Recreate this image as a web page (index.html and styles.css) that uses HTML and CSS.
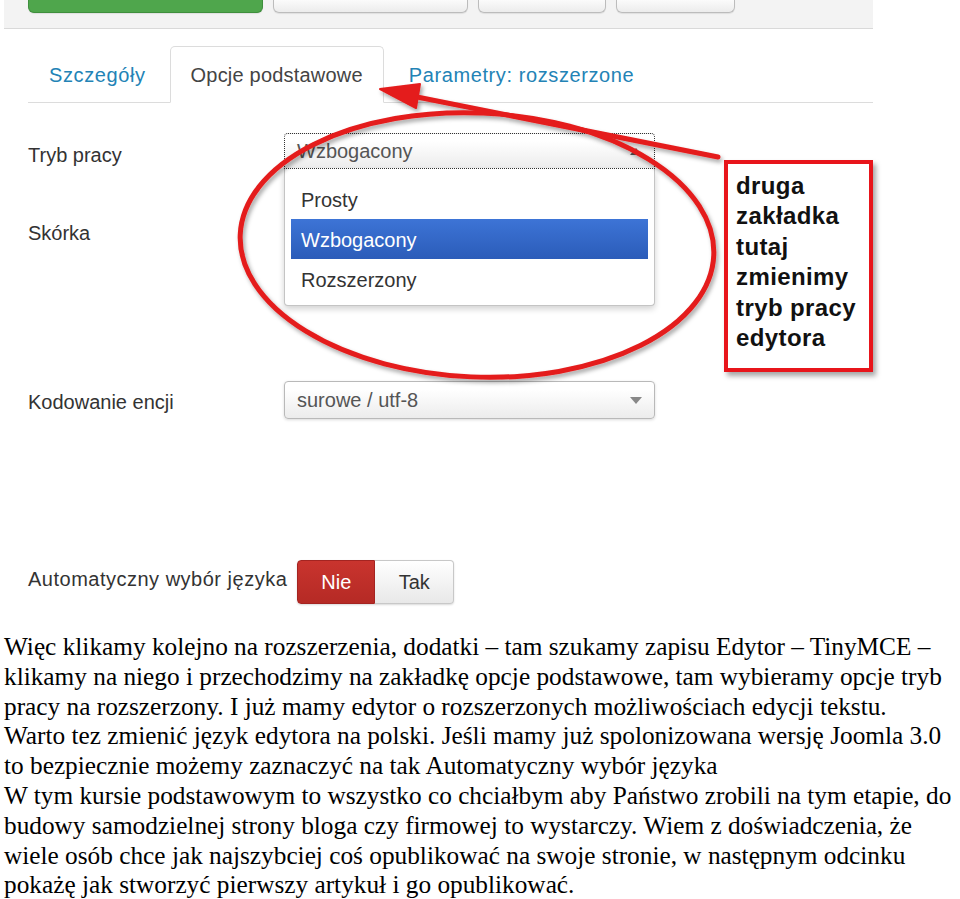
FILE: index.html
```html
<!DOCTYPE html>
<html lang="pl">
<head>
    <meta charset="UTF-8">
    <title>Edytor TinyMCE – opcje podstawowe</title>
    <link rel="stylesheet" href="styles.css">
</head>
<body>
    <div class="page">
        <div class="shot">
            <div class="toolbar">
                <span class="tb-btn tb-save"></span>
                <span class="tb-btn tb-w2"></span>
                <span class="tb-btn tb-w3"></span>
                <span class="tb-btn tb-w4"></span>
            </div>

            <ul class="tabs">
                <li class="tab first">Szczegóły</li>
                <li class="tab active">Opcje podstawowe</li>
                <li class="tab">Parametry: rozszerzone</li>
            </ul>

            <div class="form">
                <div class="row row-mode">
                    <label>Tryb pracy</label>
                    <div class="select focus">Wzbogacony<span class="caret dark"></span></div>
                </div>
                <div class="row row-skin">
                    <label>Skórka</label>
                </div>
                <div class="row row-enc">
                    <label>Kodowanie encji</label>
                    <div class="select">surowe / utf-8<span class="caret"></span></div>
                </div>
                <div class="row row-lang">
                    <label>Automatyczny wybór języka</label>
                    <div class="toggle">
                        <span class="opt on">Nie</span>
                        <span class="opt">Tak</span>
                    </div>
                </div>
            </div>

            <!-- open list of the "Tryb pracy" select -->
            <ul class="dropdown">
                <li>Prosty</li>
                <li class="hl">Wzbogacony</li>
                <li>Rozszerzony</li>
            </ul>

            <div class="callout">
                druga<br>
                zakładka<br>
                tutaj<br>
                zmienimy<br>
                tryb pracy<br>
                edytora
            </div>

            <svg class="marks" viewBox="0 0 960 620" width="960" height="620">
                <defs>
                    <filter id="shade" x="-10%" y="-10%" width="120%" height="130%">
                        <feDropShadow dx="2" dy="3" stdDeviation="2" flood-color="#000" flood-opacity="0.35"/>
                    </filter>
                </defs>
                <g filter="url(#shade)" fill="none" stroke="#e41c1c" stroke-linecap="round">
                    <ellipse cx="477" cy="245" rx="237" ry="132" stroke-width="5" transform="rotate(2.5 477 245)"/>
                    <line x1="718" y1="157" x2="412" y2="96" stroke-width="5"/>
                    <polygon points="380,89 420,84 416,108" fill="#e41c1c" stroke-width="2" stroke-linejoin="round"/>
                </g>
            </svg>
        </div>

        <p class="article">
            Więc klikamy kolejno na rozszerzenia, dodatki – tam szukamy zapisu Edytor – TinyMCE –<br>
            klikamy na niego i przechodzimy na zakładkę opcje podstawowe, tam wybieramy opcje tryb<br>
            pracy na rozszerzony. I już mamy edytor o rozszerzonych możliwościach edycji tekstu.<br>
            Warto tez zmienić język edytora na polski. Jeśli mamy już spolonizowana wersję Joomla 3.0<br>
            to bezpiecznie możemy zaznaczyć na tak Automatyczny wybór języka<br>
            W tym kursie podstawowym to wszystko co chciałbym aby Państwo zrobili na tym etapie, do<br>
            budowy samodzielnej strony bloga czy firmowej to wystarczy. Wiem z doświadczenia, że<br>
            wiele osób chce jak najszybciej coś opublikować na swoje stronie, w następnym odcinku<br>
            pokażę jak stworzyć pierwszy artykuł i go opublikować.
        </p>
    </div>
</body>
</html>
```

FILE: styles.css
```css
* {
    margin: 0;
    padding: 0;
    box-sizing: border-box;
}

body {
    background: #fff;
    color: #000;
}

.page {
    position: relative;
    width: 960px;
}

/* the pasted Joomla screenshot */
.shot {
    position: relative;
    width: 869px;
    margin-left: 4px;
    padding-bottom: 8px;
    font-family: "Liberation Sans", Arial, sans-serif;
    font-size: 20px;
    color: #333;
}

.toolbar {
    display: flex;
    gap: 10px;
    height: 29px;
    padding-left: 24px;
    background: #f3f3f3;
    border-bottom: 1px solid #d9d9d9;
}

.tb-btn {
    display: block;
    width: 195px;
    height: 13px;
    background: linear-gradient(#fbfbfb, #ececec);
    border: 1px solid #bcbcbc;
    border-top: none;
    border-radius: 0 0 6px 6px;
    box-shadow: 0 1px 1px rgba(0,0,0,0.08);
}

.tb-save {
    width: 235px;
    background: #4fa64c;
    border-color: #3f8f3d;
}

.tb-w3 {
    width: 128px;
}

.tb-w4 {
    width: 119px;
}

.tabs {
    display: flex;
    list-style: none;
    margin: 17px 0 0 24px;
    border-bottom: 1px solid #dcdcdc;
}

.tab {
    height: 57px;
    padding: 0 20px;
    line-height: 56px;
    color: #2383b6;
    letter-spacing: 0.6px;
    margin-bottom: -1px;
    border: 1px solid transparent;
    border-radius: 5px 5px 0 0;
}

.tab.first {
    padding-right: 23px;
}

.tab.active {
    color: #444;
    letter-spacing: 0.2px;
    background: #fff;
    border-color: #dcdcdc;
    border-bottom-color: #fff;
    margin-right: 4px;
}

.form {
    padding-left: 24px;
}

.row {
    display: flex;
    align-items: center;
    height: 36px;
}

.row label {
    width: 256px;
    flex: none;
    margin-top: 8px;
}

.row-mode {
    margin-top: 30px;
}

.row-skin {
    margin-top: 42px;
}

.row-enc {
    margin-top: 134px;
    height: 38px;
}

.row-enc label {
    margin-top: 4px;
}

.row-lang {
    margin-top: 141px;
    height: 44px;
}

.row-lang label {
    width: auto;
    margin: 0 10px 6px 0;
    letter-spacing: 0.5px;
}

.select {
    position: relative;
    width: 371px;
    height: 100%;
    padding-left: 12px;
    display: flex;
    align-items: center;
    color: #555;
    background: linear-gradient(#fff 20%, #ececec);
    border: 1px solid #b9b9b9;
    border-radius: 4px;
    box-shadow: 0 1px 3px rgba(0,0,0,0.15);
}

.select.focus {
    border: 1px dotted #333;
    border-radius: 4px 4px 0 0;
    box-shadow: none;
}

.caret {
    position: absolute;
    right: 12px;
    top: 15px;
    border-left: 6px solid transparent;
    border-right: 6px solid transparent;
    border-top: 7px solid #888;
}

.caret.dark {
    top: 14px;
    border-top: none;
    border-bottom: 7px solid #555;
}

.toggle {
    display: flex;
    height: 100%;
    border-radius: 4px;
    box-shadow: 0 1px 2px rgba(0,0,0,0.15);
}

.opt {
    width: 79px;
    display: flex;
    align-items: center;
    justify-content: center;
    color: #333;
    background: linear-gradient(#fff, #e8e8e8);
    border: 1px solid #c8c8c8;
    border-left: none;
    border-radius: 0 4px 4px 0;
}

.opt.on {
    width: 78px;
    color: #fff;
    background: linear-gradient(#c9342e, #b52a25);
    border: 1px solid #a42421;
    border-radius: 4px 0 0 4px;
}

.dropdown {
    position: absolute;
    left: 280px;
    top: 169px;
    width: 371px;
    height: 137px;
    list-style: none;
    padding: 10px 6px 0;
    background: #fff;
    border: 1px solid #c4c4c4;
    border-top: none;
    border-radius: 0 0 4px 4px;
    box-shadow: 0 3px 6px rgba(0,0,0,0.18);
}

.dropdown li {
    height: 40px;
    line-height: 42px;
    padding-left: 10px;
    color: #333;
}

.dropdown li.hl {
    color: #fff;
    background: linear-gradient(#3d74d6, #2b5cb9);
}

.callout {
    position: absolute;
    left: 720px;
    top: 160px;
    width: 149px;
    height: 212px;
    padding: 7px 0 0 8px;
    border: 4px solid #e8151b;
    background: #fff;
    font-weight: bold;
    font-size: 24px;
    line-height: 30.4px;
    letter-spacing: 0.4px;
    color: #111;
    box-shadow: 3px 4px 5px rgba(0,0,0,0.35);
}

.marks {
    position: absolute;
    left: -4px;
    top: 0;
    pointer-events: none;
}

.article {
    margin: 20px 0 0 4px;
    font-family: "Liberation Serif", "Times New Roman", serif;
    font-size: 25.3px;
    line-height: 29.8px;
    white-space: nowrap;
    color: #000;
}
```
